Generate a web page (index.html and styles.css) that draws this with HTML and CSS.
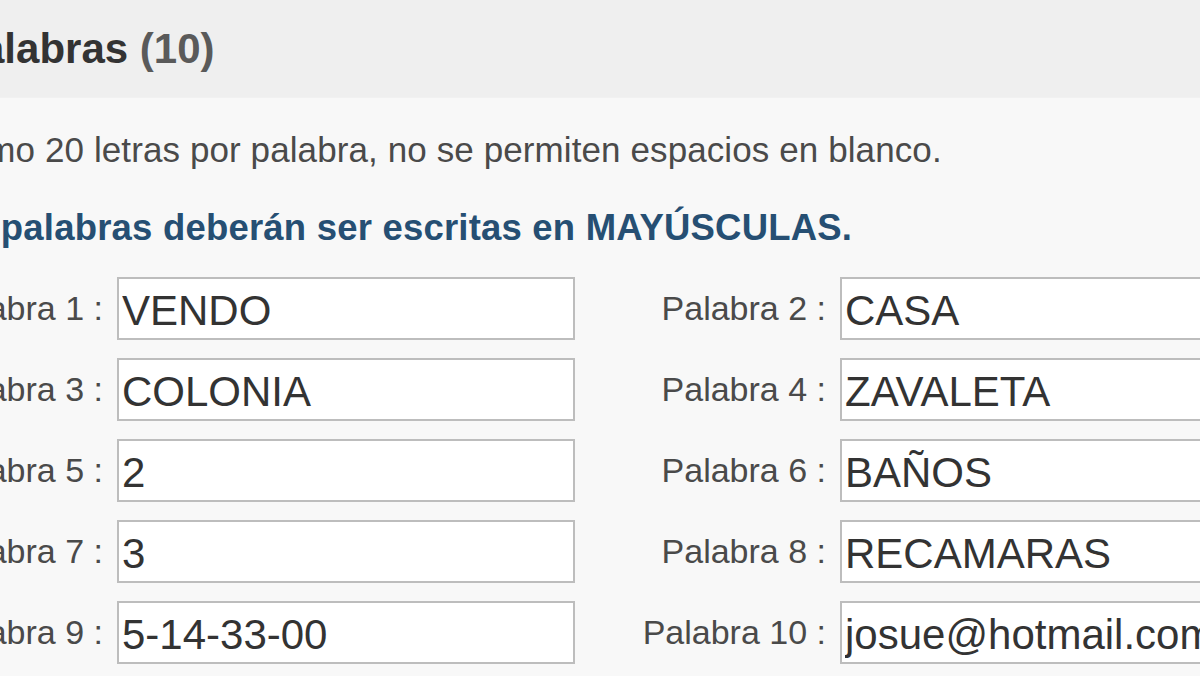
FILE: index.html
```html
<!DOCTYPE html>
<html lang="es">
<head>
<meta charset="utf-8">
<title>Palabras (10)</title>
<link rel="stylesheet" href="styles.css">
</head>
<body>
<div class="panel">
  <div class="panel-head">
    <h2 class="title">Palabras <span class="count">(10)</span></h2>
  </div>
  <div class="panel-body">
    <p class="hint">Máximo 20 letras por palabra, no se permiten espacios en blanco.</p>
    <p class="notice">Las palabras deberán ser escritas en MAYÚSCULAS.</p>
    <div class="words">
      <label class="lbl" for="p1">Palabra 1 :</label>
      <input class="field" id="p1" type="text" value="VENDO">
      <label class="lbl" for="p2">Palabra 2 :</label>
      <input class="field" id="p2" type="text" value="CASA">

      <label class="lbl" for="p3">Palabra 3 :</label>
      <input class="field" id="p3" type="text" value="COLONIA">
      <label class="lbl" for="p4">Palabra 4 :</label>
      <input class="field" id="p4" type="text" value="ZAVALETA">

      <label class="lbl" for="p5">Palabra 5 :</label>
      <input class="field" id="p5" type="text" value="2">
      <label class="lbl" for="p6">Palabra 6 :</label>
      <input class="field" id="p6" type="text" value="BAÑOS">

      <label class="lbl" for="p7">Palabra 7 :</label>
      <input class="field" id="p7" type="text" value="3">
      <label class="lbl" for="p8">Palabra 8 :</label>
      <input class="field" id="p8" type="text" value="RECAMARAS">

      <label class="lbl" for="p9">Palabra 9 :</label>
      <input class="field" id="p9" type="text" value="5-14-33-00">
      <label class="lbl" for="p10">Palabra 10 :</label>
      <input class="field" id="p10" type="text" value="josue@hotmail.com">
    </div>
  </div>
</div>
</body>
</html>
```

FILE: styles.css
```css
html, body {
  margin: 0;
  padding: 0;
  background: #f8f8f8;
  overflow: hidden;
}

body {
  font-family: "Liberation Sans", Arial, sans-serif;
  color: #444;
}

.panel {
  margin-left: -90px;
  width: 1400px;
}

.panel-head {
  height: 98px;
  background: #efefef;
  display: flex;
  align-items: center;
  padding-left: 43px;
  border-bottom: 1px solid #f1f1f1;
  box-sizing: border-box;
}

.title {
  margin: 0;
  font-size: 42px;
  font-weight: bold;
  color: #333;
  line-height: 48px;
}

.count {
  color: #5a5a5a;
}

.panel-body {
  padding-top: 32px;
}

.hint {
  margin: 0;
  font-size: 35px;
  line-height: 40px;
  color: #4a4a4a;
  letter-spacing: 0.1px;
  padding-left: 2px;
}

.notice {
  margin: 38px 0 0;
  font-size: 36.5px;
  line-height: 40px;
  font-weight: bold;
  color: #264f73;
  letter-spacing: 0.2px;
  padding-left: 17px;
}

.words {
  margin-top: 29px;
  display: grid;
  grid-template-columns: 207px 458px 265px 458px;
  row-gap: 18px;
  align-items: center;
}

.lbl {
  text-align: right;
  padding-right: 14px;
  font-size: 34px;
  color: #4a4a4a;
  white-space: nowrap;
}

.field {
  box-sizing: border-box;
  height: 63px;
  width: 458px;
  margin: 0;
  padding: 5px 3px 0;
  border: 2px solid #bdbdbd;
  background: #fff;
  font-family: "Liberation Sans", Arial, sans-serif;
  font-size: 42px;
  color: #333;
  outline: none;
}
```
